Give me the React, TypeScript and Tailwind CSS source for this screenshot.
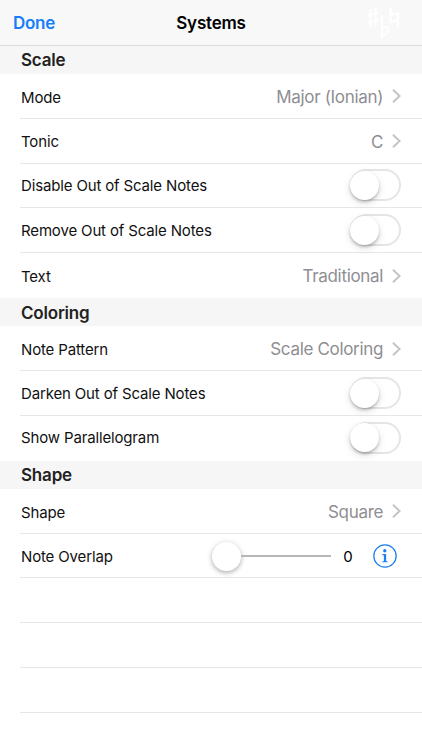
import React, { useState } from "react";

function Chevron() {
    return (
        <svg className="ml-[9px] h-4 w-[9px] shrink-0" viewBox="0 0 9 16" fill="none">
            <path d="M1 1.800L7.600 8L1 14.200" stroke="#c2c2c7" strokeWidth="1.9" />
        </svg>
    );
}

function SectionHeader({ title, className = "h-[28.1px] pt-px" }: { title: string; className?: string }) {
    return (
        <div className={`flex items-center bg-[#f6f6f6] pl-[21px] ${className}`}>
            <h2 className="text-[17px] leading-6 font-semibold tracking-[-0.2px] text-[#222]">{title}</h2>
        </div>
    );
}

interface RowProps {
    label?: string;
    last?: boolean;
    labelClass?: string;
    children?: React.ReactNode;
}

function Row({ label, last, labelClass = "pt-[2px]", children }: RowProps) {
    return (
        <div
            className={`ml-5 flex h-[44.8px] items-center justify-between border-b pr-[21px] pl-px ${last ? "border-transparent" : "border-[#e6e6e8]"}`}
        >
            <span className={`text-[15px] leading-5 tracking-[-0.15px] whitespace-nowrap text-[#111] ${labelClass}`}>
                {label}
            </span>
            {children}
        </div>
    );
}

function LinkRow({ label, value, last }: { label: string; value: string; last?: boolean }) {
    return (
        <Row label={label} last={last} labelClass="pt-[3.5px]">
            <div className="flex items-center pt-px">
                <span className="pt-px text-[17px] leading-6 tracking-[-0.33px] text-[#8e8e93]">{value}</span>
                <Chevron />
            </div>
        </Row>
    );
}

function ToggleRow({ label, last }: { label: string; last?: boolean }) {
    const [on, setOn] = useState(false);

    return (
        <Row label={label} last={last} labelClass="pt-px">
            <button
                role="switch"
                aria-checked={on}
                aria-label={label}
                onClick={() => setOn(!on)}
                className={`flex h-[32px] w-[51px] items-center rounded-full border-2 ${on ? "justify-end border-[#4cd964] bg-[#4cd964]" : "border-[#e5e5e5] bg-white"}`}
            >
                <span className="-ml-[2px] size-[29px] shrink-0 rounded-full bg-white shadow-[0_2px_3px_rgba(0,0,0,0.22),0_3px_8px_rgba(0,0,0,0.12)]" />
            </button>
        </Row>
    );
}

function Accidentals() {
    return (
        <svg className="h-8 w-9" viewBox="0 0 36 32" fill="none" stroke="white" strokeWidth="2">
            {/* sharp */}
            <path d="M4.500 2V20.500M9.500 1V19.500M1.500 8L12.500 5.500M1.500 15.500L12.500 13" />
            {/* flat */}
            <path d="M16 8.500V30C20 27.500 23.200 24.500 22.700 21.800C22.200 19.200 18.500 19.800 16 22.500" />
            {/* natural */}
            <path d="M24.500 1V15L32 13M32 20V6L24.500 8" />
        </svg>
    );
}

export default function App() {
    return (
        <div className="min-h-[750px] w-full overflow-hidden bg-white font-['Inter','Liberation_Sans',sans-serif]">
            <header className="grid h-[46px] grid-cols-3 items-center border-b border-[#dcdcdc] bg-[#f8f8f8]">
                <button className="justify-self-start pl-[13px] text-[17px] leading-6 font-semibold tracking-[-0.3px] text-[#177efb]">
                    Done
                </button>
                <h1 className="text-center text-[17px] leading-6 font-semibold tracking-[-0.2px] text-black">Systems</h1>
                <div className="justify-self-end pr-5">
                    <Accidentals />
                </div>
            </header>

            <SectionHeader title="Scale" className="h-[28px]" />
            <LinkRow label="Mode" value="Major (Ionian)" />
            <LinkRow label="Tonic" value="C" />
            <ToggleRow label="Disable Out of Scale Notes" />
            <ToggleRow label="Remove Out of Scale Notes" />
            <LinkRow label="Text" value="Traditional" last />

            <SectionHeader title="Coloring" className="h-[28.4px] pt-px" />
            <LinkRow label="Note Pattern" value="Scale Coloring" />
            <ToggleRow label="Darken Out of Scale Notes" />
            <ToggleRow label="Show Parallelogram" last />

            <SectionHeader title="Shape" />
            <LinkRow label="Shape" value="Square" />
            <Row label="Note Overlap">
                <div className="flex items-center pt-px pr-1">
                    <span className="size-[29px] rounded-full bg-white shadow-[0_2px_4px_rgba(0,0,0,0.22),0_1px_7px_rgba(0,0,0,0.12)]" />
                    <span className="h-[2px] w-[90px] bg-[#b7b7b7]" />
                    <span className="w-[34px] pt-px text-center text-[15px] leading-5 text-black">0</span>
                    <svg className="ml-2 size-[24px]" viewBox="0 0 23 23" fill="none">
                        <circle cx="11.500" cy="11.500" r="10.700" stroke="#1c7ff3" strokeWidth="1.2" />
                        <circle cx="11.300" cy="6.500" r="1.600" fill="#1c7ff3" />
                        <path d="M9 9.700H12.600V16.500H14V17.500H9V16.500H10.400V10.700H9Z" fill="#1c7ff3" />
                    </svg>
                </div>
            </Row>
            <Row />
            <Row />
            <Row />
        </div>
    );
}
